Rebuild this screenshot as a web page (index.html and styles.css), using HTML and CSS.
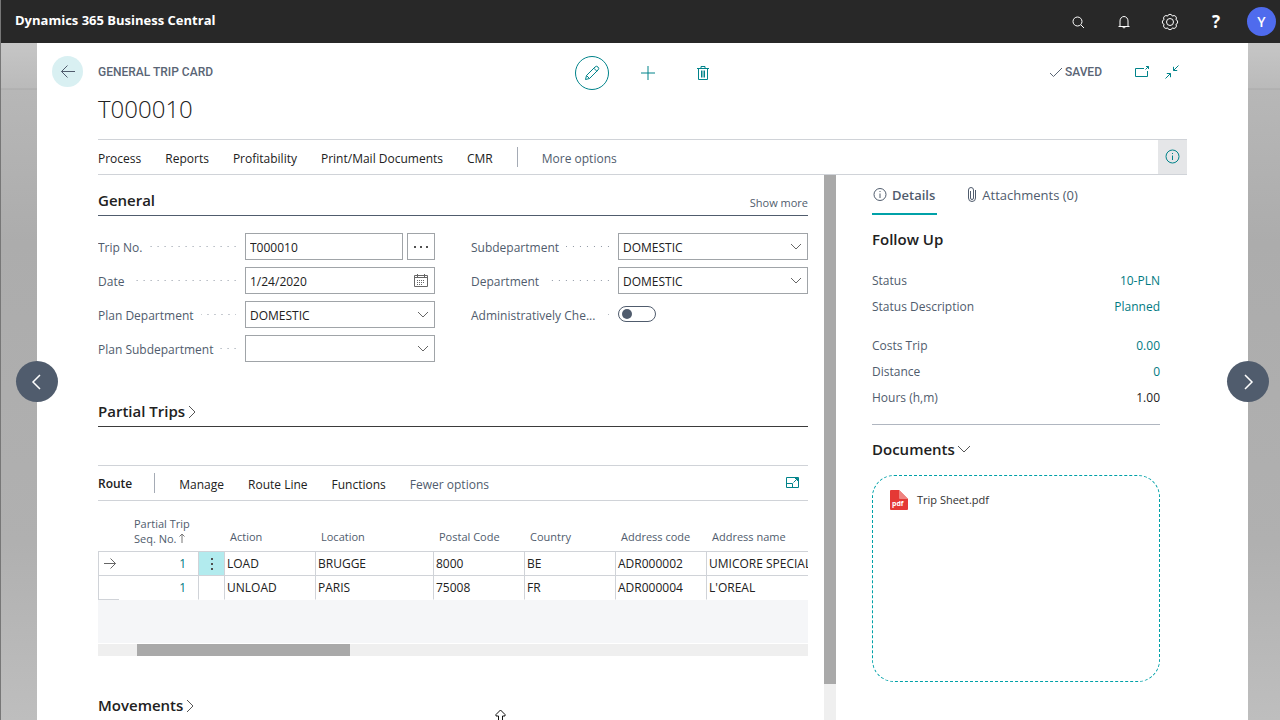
FILE: index.html
```html
<!DOCTYPE html>
<html lang="en">
<head>
    <meta charset="UTF-8">
    <title>T000010 - General Trip Card</title>
    <link rel="stylesheet" href="styles.css">
</head>
<body>
    <header class="topbar">
        <span class="brand">Dynamics 365 Business Central</span>
        <nav class="topbar-tools">
            <button class="tool" aria-label="Search"><svg width="16" height="16" viewBox="0 0 16 16"><circle cx="7.500" cy="7.500" r="4.500"/><path d="M11 11l3 3"/></svg></button>
            <button class="tool" aria-label="Notifications"><svg width="16" height="16" viewBox="0 0 16 16"><path d="M2.500 12.500h11M4 12.500V7a4 4.500 0 0 1 8 0v5.500M6.700 13a1.400 1.400 0 0 0 2.600 0"/></svg></button>
            <button class="tool" aria-label="Settings"><svg width="18" height="18" viewBox="0 0 18 18"><circle cx="9" cy="9" r="3.500"/><path d="M14.900 11.400A2.500 2.500 0 0 1 11.400 14.900A2.500 2.500 0 0 1 6.600 14.900A2.500 2.500 0 0 1 3.100 11.400A2.500 2.500 0 0 1 3.100 6.600A2.500 2.500 0 0 1 6.600 3.100A2.500 2.500 0 0 1 11.400 3.100A2.500 2.500 0 0 1 14.900 6.600A2.500 2.500 0 0 1 14.900 11.400z"/></svg></button>
            <button class="tool help" aria-label="Help">?</button>
            <button class="avatar" aria-label="Account">Y</button>
        </nav>
    </header>

    <div class="backdrop">
        <button class="pager prev" aria-label="Previous"><svg width="18" height="18" viewBox="0 0 18 18"><path d="M12 2L5 9l7 7"/></svg></button>
        <button class="pager next" aria-label="Next"><svg width="18" height="18" viewBox="0 0 18 18"><path d="M6 2l7 7-7 7"/></svg></button>

        <main class="sheet">
            <div class="gutter">
                <button class="back" aria-label="Back"><svg width="16" height="16" viewBox="0 0 16 16"><path d="M15 7.500H1.500M7.500 1.500l-6 6 6 6"/></svg></button>
            </div>
            <div class="card">
                <div class="card-head">
                    <span class="caption">General Trip Card</span>
                    <div class="head-actions">
                        <button class="edit" aria-label="Edit"><svg width="16" height="16" viewBox="0 0 16 16"><path d="M1.500 14.500l1-4L11 2a2 2 0 0 1 3 3l-8.500 8.500zM2.500 10.500l3 3M9.800 3.200l3 3"/></svg></button>
                        <button class="icon-btn" aria-label="New"><svg width="16" height="16" viewBox="0 0 16 16"><path d="M8 1v14M1 8h14"/></svg></button>
                        <button class="icon-btn" aria-label="Delete"><svg width="16" height="16" viewBox="0 0 16 16"><path d="M2 3.500h12M3.500 3.500v11h9v-11M6 3V1.500h4V3M6.500 5.500v7M8 5.500v7M9.500 5.500v7"/></svg></button>
                    </div>
                    <div class="head-status">
                        <span class="saved"><svg width="14" height="14" viewBox="0 0 14 14"><path d="M1 8l3.500 3.500L13 3"/></svg>Saved</span>
                        <button class="icon-btn" aria-label="Open in new window"><svg width="16" height="16" viewBox="0 0 16 16"><path d="M10 4.500H1.500v8h12V7M11.500 5.500l3-3M12 2.500h2.500V5"/></svg></button>
                        <button class="icon-btn" aria-label="Collapse"><svg width="16" height="16" viewBox="0 0 16 16"><path d="M1.500 14.500l5-5M2.800 9.500h3.700v3.700M14.500 1.500l-5 5M9.500 2.800v3.700h3.700"/></svg></button>
                    </div>
                </div>
                <h1>T000010</h1>

                <nav class="actionbar">
                    <button>Process</button>
                    <button>Reports</button>
                    <button>Profitability</button>
                    <button>Print/Mail Documents</button>
                    <button>CMR</button>
                    <span class="divider"></span>
                    <button class="muted">More options</button>
                    <button class="info" aria-label="Toggle details"><svg width="16" height="16" viewBox="0 0 16 16"><circle cx="7.500" cy="7.500" r="6.500"/><path d="M7.500 6.500V11M7.500 4v1"/></svg></button>
                </nav>

                <div class="card-body">
                    <div class="content">
                        <section>
                            <div class="group-head general">
                                <h2>General</h2>
                                <button class="show-more">Show more</button>
                            </div>
                            <form class="fields">
                                <div class="column">
                                    <div class="field">
                                        <label for="trip-no">Trip No.</label><span class="dots"></span>
                                        <div class="control with-button">
                                            <input type="text" id="trip-no" value="T000010">
                                            <button type="button" class="assist" aria-label="Assist edit"><svg width="14" height="4" viewBox="0 0 14 4"><path d="M0 1h2v2H0zM6 1h2v2H6zM12 1h2v2h-2z"/></svg></button>
                                        </div>
                                    </div>
                                    <div class="field">
                                        <label for="date">Date</label><span class="dots"></span>
                                        <div class="control">
                                            <input type="text" id="date" value="1/24/2020">
                                            <svg class="calendar" width="16" height="14" viewBox="0 0 16 14"><path d="M1.500 1.500h13v11h-13zM1.500 3.500h13M4.500 0v3M11.500 0v3"/><path class="days" d="M4 6.500h8M4 8.500h8M4 10.500h6"/></svg>
                                        </div>
                                    </div>
                                    <div class="field">
                                        <label for="plan-department">Plan Department</label><span class="dots"></span>
                                        <div class="control">
                                            <select id="plan-department"><option>DOMESTIC</option></select>
                                            <svg class="chevron" width="12" height="8" viewBox="0 0 12 8"><path d="M1 1l5 5 5-5"/></svg>
                                        </div>
                                    </div>
                                    <div class="field">
                                        <label for="plan-subdepartment">Plan Subdepartment</label><span class="dots"></span>
                                        <div class="control">
                                            <select id="plan-subdepartment"><option></option></select>
                                            <svg class="chevron" width="12" height="8" viewBox="0 0 12 8"><path d="M1 1l5 5 5-5"/></svg>
                                        </div>
                                    </div>
                                </div>
                                <div class="column">
                                    <div class="field">
                                        <label for="subdepartment">Subdepartment</label><span class="dots"></span>
                                        <div class="control">
                                            <select id="subdepartment"><option>DOMESTIC</option></select>
                                            <svg class="chevron" width="12" height="8" viewBox="0 0 12 8"><path d="M1 1l5 5 5-5"/></svg>
                                        </div>
                                    </div>
                                    <div class="field">
                                        <label for="department">Department</label><span class="dots"></span>
                                        <div class="control">
                                            <select id="department"><option>DOMESTIC</option></select>
                                            <svg class="chevron" width="12" height="8" viewBox="0 0 12 8"><path d="M1 1l5 5 5-5"/></svg>
                                        </div>
                                    </div>
                                    <div class="field">
                                        <label for="checked">Administratively Che...</label><span class="dots"></span>
                                        <div class="control">
                                            <input type="checkbox" class="toggle" id="checked">
                                        </div>
                                    </div>
                                </div>
                            </form>
                        </section>

                        <section>
                            <div class="group-head partial">
                                <h2>Partial Trips</h2>
                                <svg class="more" width="10" height="14" viewBox="0 0 10 14"><path d="M2 1l6 6-6 6"/></svg>
                            </div>
                        </section>

                        <section>
                            <div class="routebar">
                                <h3>Route</h3>
                                <span class="divider"></span>
                                <button>Manage</button>
                                <button>Route Line</button>
                                <button>Functions</button>
                                <button class="muted">Fewer options</button>
                                <button class="icon-btn expand" aria-label="Expand list"><svg width="14" height="14" viewBox="0 0 14 14"><path d="M.5 1.500h12v10H.5zM.5 7.500h6v4M7.500 6.500l4-4M9 2.500h2.500V5"/></svg></button>
                            </div>
                            <div class="grid-wrap">
                                <table class="lines">
                                    <colgroup>
                                        <col class="c-mark"><col class="c-seq"><col class="c-menu"><col class="c-std"><col class="c-loc"><col class="c-std"><col class="c-std"><col class="c-std"><col>
                                    </colgroup>
                                    <thead>
                                        <tr>
                                            <th></th>
                                            <th class="seq">Partial Trip<br>Seq. No. <svg width="6" height="10" viewBox="0 0 6 10"><path d="M3 10V1M.5 3.500L3 1l2.500 2.500"/></svg></th>
                                            <th></th>
                                            <th>Action</th>
                                            <th>Location</th>
                                            <th>Postal Code</th>
                                            <th>Country</th>
                                            <th>Address code</th>
                                            <th>Address name</th>
                                        </tr>
                                    </thead>
                                    <tbody>
                                        <tr>
                                            <td class="mark"><svg width="14" height="12" viewBox="0 0 14 12"><path d="M1 5.500h11.500M7.500.5l5 5-5 5"/></svg></td>
                                            <td class="num"><a href="#">1</a></td>
                                            <td class="menu"><button aria-label="Row options"><svg width="2" height="12" viewBox="0 0 2 12"><path d="M0 0h2v2H0zM0 5h2v2H0zM0 10h2v2H0z"/></svg></button></td>
                                            <td>LOAD</td>
                                            <td>BRUGGE</td>
                                            <td>8000</td>
                                            <td>BE</td>
                                            <td>ADR000002</td>
                                            <td>UMICORE SPECIAL</td>
                                        </tr>
                                        <tr>
                                            <td class="mark"></td>
                                            <td class="num"><a href="#">1</a></td>
                                            <td></td>
                                            <td>UNLOAD</td>
                                            <td>PARIS</td>
                                            <td>75008</td>
                                            <td>FR</td>
                                            <td>ADR000004</td>
                                            <td>L'OREAL</td>
                                        </tr>
                                    </tbody>
                                </table>
                                <div class="empty"></div>
                                <div class="hscroll"><div class="thumb"></div></div>
                            </div>
                        </section>

                        <section>
                            <div class="group-head movements">
                                <h2>Movements</h2>
                                <svg class="more" width="10" height="14" viewBox="0 0 10 14"><path d="M2 1l6 6-6 6"/></svg>
                            </div>
                        </section>
                    </div>

                    <div class="vscroll"><div class="thumb"></div></div>

                    <aside class="factbox">
                        <div class="tabs">
                            <button class="tab active"><svg width="14" height="14" viewBox="0 0 14 14"><circle cx="7" cy="6.500" r="6"/><path d="M7 5.500V10M7 3v1"/></svg>Details</button>
                            <button class="tab"><svg width="10" height="16" viewBox="0 0 10 16"><path d="M8.500 3v8a3.500 3.500 0 0 1-7 0V3a2.500 2.500 0 0 1 5 0v8a1.500 1.500 0 0 1-3 0V4"/></svg>Attachments (0)</button>
                        </div>
                        <h2>Follow Up</h2>
                        <dl class="facts">
                            <div><dt>Status</dt><dd><a href="#">10-PLN</a></dd></div>
                            <div><dt>Status Description</dt><dd><a href="#">Planned</a></dd></div>
                        </dl>
                        <dl class="facts">
                            <div><dt>Costs Trip</dt><dd><a href="#">0.00</a></dd></div>
                            <div><dt>Distance</dt><dd><a href="#">0</a></dd></div>
                            <div><dt>Hours (h,m)</dt><dd>1.00</dd></div>
                        </dl>
                        <div class="documents">
                            <h2>Documents<svg width="14" height="8" viewBox="0 0 14 8"><path d="M1 1l6 6 6-6"/></svg></h2>
                            <div class="dropzone">
                                <a class="file" href="#">
                                    <svg class="pdf" width="18" height="20" viewBox="0 0 18 20"><path fill="#e53935" d="M1 0h8l9 9v10a1 1 0 0 1-1 1H1a1 1 0 0 1-1-1V1a1 1 0 0 1 1-1z"/><path fill="#ef8380" d="M9 0l9 9h-8a1 1 0 0 1-1-1z"/><text x="2" y="16">pdf</text></svg>
                                    Trip Sheet.pdf
                                </a>
                            </div>
                        </div>
                    </aside>
                </div>
            </div>
        </main>
        <svg class="pointer" width="11" height="14" viewBox="0 0 11 14"><path d="M5.500 1L10 5.500V7H7.500v7h-4V7H1V5.500z"/></svg>
    </div>
</body>
</html>
```
FILE: styles.css
```css
* {
    box-sizing: border-box;
}
body {
    margin: 0;
    height: 100vh;
    display: flex;
    flex-direction: column;
    overflow: hidden;
    border-left: 1px solid #777;
    font-family: "Open Sans", "Noto Sans", sans-serif;
    font-size: 12px;
    line-height: 16px;
    color: #212121;
}
button, input, select {
    font: inherit;
    color: inherit;
}
button {
    background: none;
    border: none;
    padding: 0;
    cursor: pointer;
}
h1, h2, h3, dl, dd {
    margin: 0;
}
a {
    color: #007a82;
    text-decoration: none;
}
svg {
    display: block;
    flex: none;
    fill: none;
    stroke: currentColor;
}

/* Top bar */
.topbar {
    flex: none;
    height: 43px;
    padding: 0 4px 0 14px;
    display: flex;
    justify-content: space-between;
    align-items: center;
    background-color: #282828;
    color: #fff;
}
.brand {
    font-size: 13px;
    font-weight: 700;
    padding-bottom: 3px;
}
.topbar-tools {
    display: flex;
    align-items: center;
    gap: 22px;
}
.tool {
    width: 24px;
    height: 24px;
    display: flex;
    align-items: center;
    justify-content: center;
}
.help {
    font-size: 17px;
    font-weight: 700;
}
.avatar {
    width: 29px;
    height: 29px;
    margin-left: -3px;
    border-radius: 50%;
    background-color: #4f6bed;
    font-size: 14px;
    font-weight: 600;
}

/* Dimmed page behind the card */
.backdrop {
    flex: 1;
    min-height: 0;
    position: relative;
    display: flex;
    padding: 0 32px 0 36px;
    background: linear-gradient(#c6c6c6, #bababa 45px, #aaa 46px, #b7b7b7 47px, #acacac 200px, #b0b0b0 500px, #bebebe);
}
.pager {
    position: absolute;
    top: 318px;
    width: 42px;
    height: 41px;
    display: flex;
    align-items: center;
    justify-content: center;
    border-radius: 50%;
    background-color: #505c6d;
    color: #fff;
}
.pager svg {
    stroke-width: 1.5;
}
.prev {
    left: 15px;
}
.next {
    right: 11px;
}

/* Card */
.sheet {
    flex: 1;
    min-width: 0;
    display: flex;
    padding-right: 61px;
    background-color: #fff;
}
.gutter {
    flex: none;
    width: 61px;
    padding: 13px 15px;
}
.back {
    width: 31px;
    height: 31px;
    display: flex;
    align-items: center;
    justify-content: center;
    border-radius: 50%;
    background-color: #d9f0f2;
    color: #505c6d;
}
.card {
    flex: 1;
    min-width: 0;
    display: flex;
    flex-direction: column;
}
.card-head {
    margin-top: 13px;
    height: 34px;
    display: grid;
    grid-template-columns: 1fr auto 1fr;
    align-items: center;
}
.caption, .saved {
    font-family: Roboto, sans-serif;
    font-weight: 500;
    text-transform: uppercase;
    color: #5a6575;
    padding-bottom: 2px;
}
.head-actions {
    display: flex;
    align-items: center;
    gap: 39px;
    color: #00838a;
}
.head-actions .edit {
    margin-right: -8px;
}
.edit {
    width: 34px;
    height: 34px;
    display: flex;
    align-items: center;
    justify-content: center;
    border: 1px solid #00838a;
    border-radius: 50%;
}
.icon-btn {
    color: #00838a;
}
.head-status {
    display: flex;
    align-items: center;
    justify-content: flex-end;
    gap: 14px;
    padding: 0 7px 2px 0;
}
.saved {
    display: flex;
    align-items: center;
    gap: 2px;
    padding: 0;
    margin-right: 18px;
}
h1 {
    font-size: 24px;
    font-weight: 300;
    line-height: 38px;
    margin-bottom: 11px;
}

/* Action bars */
.actionbar, .routebar {
    flex: none;
    height: 36px;
    display: flex;
    align-items: center;
    gap: 24px;
    border-top: 1px solid #d0d3d8;
    border-bottom: 1px solid #d0d3d8;
}
.actionbar button:not(.info), .routebar button:not(.expand) {
    padding-top: 4px;
}
.divider {
    width: 1px;
    height: 20px;
    background-color: #a5abb5;
}
.muted {
    color: #505c6d;
}
.info {
    align-self: stretch;
    width: 29px;
    margin-left: auto;
    display: flex;
    align-items: center;
    justify-content: center;
    background-color: #e5e6e8;
    color: #00838a;
}
.card-body {
    flex: 1;
    min-height: 0;
    display: flex;
}
.content {
    flex: 1;
    min-width: 0;
    padding-right: 16px;
    overflow: hidden;
}
.vscroll {
    flex: none;
    width: 12px;
    background-color: #efefef;
}
.vscroll .thumb {
    height: 93.4%;
    background-color: #a9a9a9;
}

/* Field groups */
h2 {
    font-size: 15px;
    font-weight: 600;
    line-height: 20px;
}
.group-head {
    height: 42px;
    padding-top: 10px;
    display: flex;
    align-items: center;
    border-bottom: 1px solid #3b3b3b;
}
.general {
    height: 41px;
    justify-content: space-between;
    border-color: #505c6d;
}
.show-more {
    font-size: 11px;
    padding-top: 6px;
    color: #505c6d;
}
.more {
    margin: 2px 0 0 2px;
    color: #555;
}
.fields {
    display: grid;
    grid-template-columns: 1fr 1fr;
    gap: 36px;
    padding-top: 17px;
}
.column {
    display: flex;
    flex-direction: column;
    gap: 7px;
}
.field {
    height: 27px;
    display: flex;
    align-items: center;
}
.field label {
    white-space: nowrap;
    color: #505c6d;
    padding-top: 3px;
}
.dots {
    flex: 1;
    height: 1px;
    margin: 0 9px 0 7px;
    background: linear-gradient(270deg, #8f97a3 1px, transparent 1px) right top / 7px 1px repeat-x;
}
.control {
    flex: none;
    width: 190px;
    display: grid;
    align-items: center;
}
.control > * {
    grid-area: 1 / 1;
}
.control input[type="text"], .control select {
    width: 100%;
    height: 27px;
    padding: 1px 4px 0;
    border: 1px solid #a0a4a8;
    border-radius: 0;
    background-color: #fff;
    appearance: none;
}
.control select {
    padding-top: 3px;
}
.control .chevron, .control .calendar {
    justify-self: end;
    margin-right: 6px;
    color: #666;
    pointer-events: none;
}
.days {
    stroke-dasharray: 1 1;
}
.control.with-button {
    display: flex;
    gap: 4px;
}
.with-button input {
    flex: 1;
    min-width: 0;
}
.assist {
    flex: none;
    width: 28px;
    height: 27px;
    display: flex;
    align-items: center;
    justify-content: center;
    border: 1px solid #a0a4a8;
    color: #505050;
}
.assist svg, .menu svg {
    fill: currentColor;
    stroke: none;
}
.toggle {
    appearance: none;
    width: 38px;
    height: 16px;
    margin: 0 0 1px;
    padding: 2px 3px;
    border: 1px solid #505c6d;
    border-radius: 8px;
}
.toggle::before {
    content: "";
    display: block;
    width: 10px;
    height: 10px;
    border-radius: 50%;
    background-color: #505c6d;
}
.toggle:checked::before {
    margin-left: auto;
}
.partial {
    margin: 23px 0 38px;
}

/* Route lines */
h3 {
    font-size: 12px;
    font-weight: 600;
}
.routebar h3 {
    margin-right: -2px;
    padding-top: 2px;
}
.expand {
    margin: 0 8px 0 auto;
}
.grid-wrap {
    overflow: hidden;
}
.lines {
    width: 100%;
    table-layout: fixed;
    border-collapse: separate;
    border-spacing: 0;
    margin-top: 15px;
}
.c-mark { width: 21px; }
.c-seq { width: 80px; }
.c-menu { width: 26px; }
.c-std { width: 91px; }
.c-loc { width: 118px; }
.lines th {
    height: 36px;
    padding: 0 0 7px 5px;
    vertical-align: bottom;
    text-align: left;
    font-size: 11px;
    font-weight: 400;
    line-height: 15px;
    white-space: nowrap;
    color: #505c6d;
    border-bottom: 1px solid #d0d3d8;
}
.lines .seq {
    padding: 0 0 5px 15px;
}
.seq svg {
    display: inline;
    color: #777;
}
.lines td {
    height: 24px;
    padding: 0 0 0 2px;
    white-space: nowrap;
    overflow: hidden;
    border-bottom: 1px solid #d0d3d8;
    border-right: 1px solid #d0d3d8;
}
.lines tr:last-child td:not(.mark) {
    border-bottom-color: #fff;
}
.lines td.mark, .lines td:last-child {
    border-right: none;
}
.lines .mark {
    padding-left: 4px;
    border-left: 1px solid #d0d3d8;
    color: #666;
}
.lines .num {
    text-align: right;
    padding-right: 12px;
}
.lines .menu {
    padding: 0;
    background-color: #b2ebee;
}
.menu button {
    width: 100%;
    display: flex;
    justify-content: center;
    color: #505050;
}
.empty {
    height: 43px;
    background-color: #f5f6f8;
}
.hscroll {
    margin-top: 1px;
    padding: 0 39px;
    background-color: #efefef;
}
.hscroll .thumb {
    width: 33.7%;
    height: 12px;
    background-color: #a9a9a9;
}
.movements {
    margin-top: 23px;
}

/* Fact box */
.factbox {
    flex: none;
    width: 351px;
    padding: 0 27px 0 36px;
}
.tabs {
    display: flex;
    gap: 29px;
    margin-bottom: 14px;
}
.tab {
    height: 40px;
    display: flex;
    align-items: center;
    gap: 5px;
    padding: 2px 2px 0 1px;
    font-size: 13px;
    color: #505c6d;
    border-bottom: 2px solid transparent;
}
.tab.active {
    font-weight: 600;
    border-color: #00a1a8;
}
.facts + .facts {
    padding-top: 13px;
}
h2 + .facts {
    padding-top: 19px;
}
.facts div {
    height: 26px;
    display: flex;
    align-items: center;
    justify-content: space-between;
}
.facts dt {
    color: #505c6d;
}
.documents {
    margin-top: 13px;
    padding-top: 14px;
    border-top: 1px solid #b0b6c0;
}
.documents h2 {
    display: flex;
    align-items: center;
    gap: 2px;
}
.documents h2 svg {
    color: #555;
}
.dropzone {
    height: 207px;
    margin-top: 16px;
    padding: 14px 17px;
    border: 1px dashed #00a1a8;
    border-radius: 22px;
}
.file {
    display: flex;
    align-items: center;
    gap: 9px;
    font-size: 11px;
    color: #333;
}
.pdf {
    stroke: none;
}
.pdf text {
    font-size: 7px;
    font-weight: 700;
    fill: #fff;
}
.pointer {
    position: absolute;
    left: 494px;
    bottom: -3px;
    fill: #fff;
    stroke: #111;
}
```
